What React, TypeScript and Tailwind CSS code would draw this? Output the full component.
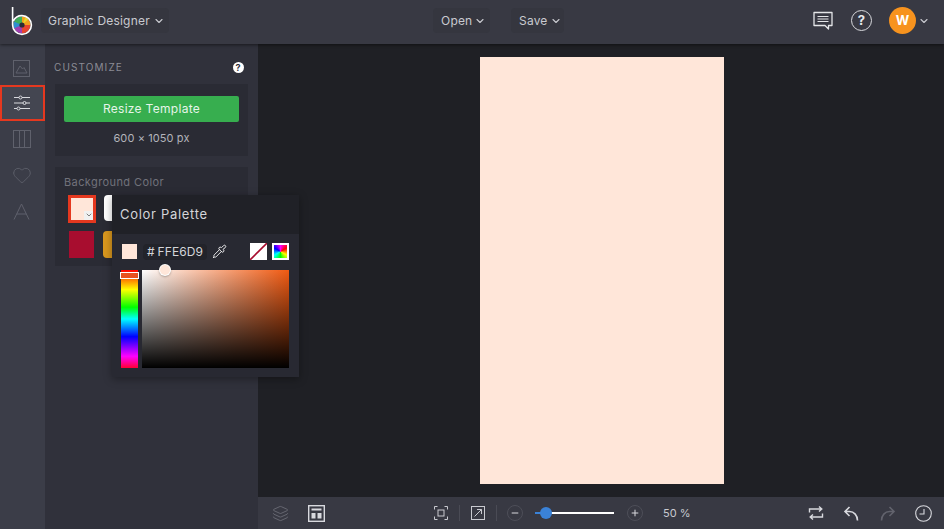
import React from 'react';
import { ChevronDown, Layers, Minus, Plus, Heart, Pipette } from 'lucide-react';

const font = { fontFamily: '"Inter", "Liberation Sans", sans-serif' };

const Logo = () => (
  <svg width="24" height="30" viewBox="0 0 24 30">
    <defs>
      <clipPath id="ring"><circle cx="12" cy="19" r="8.5" /></clipPath>
    </defs>
    <g clipPath="url(#ring)">
      <path d="M12 19 L12 8 L24 8 L24 19 Z" fill="#f2a01e" />
      <path d="M12 19 L24 19 L24 30 L12 30 Z" fill="#e8452f" />
      <path d="M12 19 L12 30 L0 30 L0 19 Z" fill="#a03fb0" />
      <path d="M12 19 L0 19 L0 8 L12 8 Z" fill="#3fae5a" />
      <path d="M12 19 L17 8 L24 8 Z" fill="#e6d72a" />
      <path d="M12 19 L0 24 L0 14 Z" fill="#2f8fd0" />
    </g>
    <circle cx="12" cy="19" r="2.6" fill="#2b2c34" />
    <path d="M2.6 1 V19 A9.4 9.4 0 1 0 12 9.6 A9.4 9.4 0 0 0 3.4 15" fill="none" stroke="#fff" strokeWidth="1.6" />
  </svg>
);

const HeaderButton = ({ label, className }: { label: string; className: string }) => (
  <button className={`flex h-[25px] items-center gap-[2px] whitespace-nowrap rounded-sm bg-[#35363f] pl-[8px] text-[12px] tracking-[0.2px] text-[#c9cad0] ${className}`}>
    {label}
    <ChevronDown size={12} strokeWidth={2.2} />
  </button>
);

const Sliders = () => (
  <svg className="mr-[2px]" width="18" height="16" viewBox="0 0 18 16" fill="none" stroke="#d8d9de" strokeWidth="1">
    <path d="M1 2.5h5M9 2.5h8M1 8h9M13 8h4M1 13.5h3M7 13.5h10" />
    <circle cx="7.5" cy="2.5" r="1.5" />
    <circle cx="11.5" cy="8" r="1.5" />
    <circle cx="5.5" cy="13.5" r="1.5" />
  </svg>
);

const App: React.FC = () => {
  return (
    <div style={font} className="flex h-[529px] w-[944px] flex-col overflow-hidden bg-[#1f2025]">
      {/* top bar */}
      <header className="relative z-10 flex h-[44px] shrink-0 items-center bg-[#383943] pb-[3px] shadow-[0_1px_3px_rgba(0,0,0,0.5)]">
        <div className="ml-[10px] w-[24px]"><Logo /></div>
        <button className="ml-[7px] flex h-[25px] w-[128px] items-center gap-[3px] whitespace-nowrap rounded-sm bg-[#35363f] pl-[7px] text-[12px] tracking-[0.2px] text-[#c9cad0]">
          Graphic Designer
          <ChevronDown size={12} strokeWidth={2.2} />
        </button>
        <HeaderButton label="Open" className="ml-[264px] w-[57px]" />
        <HeaderButton label="Save" className="ml-[21px] w-[53px]" />
        <svg className="ml-[248px]" width="22" height="22" viewBox="0 0 22 22" fill="none" stroke="#e4e5e8" strokeWidth="1.3">
          <path d="M2 2.5h18v13h-3.5v3.5l-3.5-3.5H2z" strokeLinejoin="round" />
          <path d="M5.5 6.5h11M5.5 9h11M5.5 11.5h11" strokeWidth="1" />
        </svg>
        <div className="ml-[17px] flex h-[21px] w-[21px] items-center justify-center rounded-full border border-[#d8d9dd] text-[13px] font-bold text-[#e8e9ec]">?</div>
        <div className="ml-[17px] flex h-[27px] w-[27px] items-center justify-center rounded-full bg-[#f7931e] text-[13px] font-bold text-white">W</div>
        <ChevronDown className="ml-[2px] text-[#c9cad0]" size={12} strokeWidth={2.2} />
      </header>

      <div className="flex min-h-0 flex-1">
        {/* icon rail */}
        <nav className="flex w-[45px] shrink-0 flex-col items-center bg-[#3b3d48] pt-[16px]">
          <svg className="mb-[8px] mr-[2px]" width="17" height="17" viewBox="0 0 17 17" fill="none" stroke="#5f616c" strokeWidth="1">
            <rect x="0.5" y="0.5" width="16" height="16" />
            <path d="M3 13l4-7 2.5 3 1.5-1.5L14 13z" />
          </svg>
          <div className="flex h-[36px] w-[45px] items-center justify-center border-2 border-[#e5381f] bg-[#444651]">
            <Sliders />
          </div>
          <svg className="mr-[2px] mt-[9px]" width="18" height="18" viewBox="0 0 18 18" fill="none" stroke="#5f616c" strokeWidth="1">
            <rect x="0.5" y="0.5" width="17" height="17" />
            <path d="M6.5 0.5v17M11.5 0.5v17" />
          </svg>
          <Heart className="mr-[2px] mt-[17px] text-[#5f616c]" size={20} strokeWidth={1} />
          <svg className="mr-[2px] mt-[18px]" width="17" height="17" viewBox="0 0 17 17" fill="none" stroke="#5f616c" strokeWidth="1">
            <path d="M1 16.5L8.5 1 16 16.5M3.6 11h9.8" />
          </svg>
        </nav>

        {/* side panel */}
        <aside className="relative w-[213px] shrink-0 bg-[#30313b] px-[10px] pt-[12px]">
          <div className="-ml-[1px] flex items-center justify-between pr-[4px] pt-[4px] text-[10px] tracking-[1.1px] text-[#8b8c95]">
            CUSTOMIZE
            <span className="flex h-[11px] w-[11px] items-center justify-center rounded-full bg-white text-[9px] font-bold text-[#30313b]">?</span>
          </div>
          <div className="mt-[9px] h-[72px] bg-[#2a2b34] px-[9px] pt-[12px]">
            <button className="flex h-[26px] w-[175px] items-center justify-center rounded-[2px] bg-[#37ae4f] text-[12px] tracking-[0.3px] text-[#e6f5e9]">
              Resize Template
            </button>
            <div className="mt-[8px] text-center text-[11px] tracking-[0.1px] text-[#b3b4bb]">600 × 1050 px</div>
          </div>
          <div className="mt-[11px] h-[99px] bg-[#2a2b34] px-[9px] pt-[7px]">
            <div className="text-[11px] tracking-[0.4px] text-[#71727b]">Background Color</div>
            <div className="mt-[4px] flex gap-[8px] pl-[4px]">
              <div className="relative h-[28px] w-[28px] border-[3px] border-[#e5381f] bg-[#ffe6d9]">
                <span className="absolute bottom-0 right-0 flex h-[9px] w-[9px] items-center justify-center bg-[#f0f0f0]">
                  <ChevronDown size={8} strokeWidth={2} className="text-[#444]" />
                </span>
              </div>
              <div className="h-[26px] w-[26px] rounded-sm bg-white" />
            </div>
            <div className="mt-[8px] flex gap-[9px] pl-[5px]">
              <div className="h-[27px] w-[25px] bg-[#a80d2f]" />
              <div className="h-[27px] w-[26px] rounded-sm bg-[#d9971e]" />
            </div>
          </div>

          {/* colour palette popover */}
          <div className="absolute left-[67px] top-[151px] z-20 w-[187px] bg-[#282932] shadow-[0_2px_8px_rgba(0,0,0,0.35)]">
            <div className="flex h-[39px] items-center bg-[#202127] pl-[8px] text-[13px] tracking-[0.7px] text-[#d4d5d9]">Color Palette</div>
            <div className="flex items-center pl-[10px] pt-[9px]">
              <div className="h-[15px] w-[15px] bg-[#ffe6d9]" />
              <div className="ml-[6px] flex h-[16px] w-[64px] items-center justify-center gap-[3px] rounded-sm bg-[#22232a] text-[12px] tracking-[0.1px] text-[#d4d5d9]">
                <span>#</span><span>FFE6D9</span>
              </div>
              <Pipette className="ml-[5px] text-white" size={15} strokeWidth={1.4} />
              <svg className="ml-[23px]" width="17" height="17" viewBox="0 0 17 17">
                <rect width="17" height="17" fill="#fff" />
                <path d="M0 17L17 0" stroke="#a80d2f" strokeWidth="1.6" />
              </svg>
              <div className="ml-[5px] h-[17px] w-[17px] border-[2px] border-white bg-[conic-gradient(#f0f,#f00,#ff0,#0f0,#0ff,#00f,#f0f)]" />
            </div>
            <div className="relative flex gap-[4px] pb-[9px] pl-[9px] pt-[10px]">
              <div className="relative h-[98px] w-[17px] bg-[linear-gradient(to_bottom,#f00_0%,#ff0_20%,#0f0_38%,#0ff_50%,#00f_68%,#f0f_88%,#f03_100%)]">
                <div className="absolute left-[-1px] top-[2px] h-[7px] w-[19px] border border-white bg-[#e8521f]" />
              </div>
              <div className="relative h-[98px] w-[147px] bg-[linear-gradient(to_bottom,transparent,#000),linear-gradient(to_right,#fff,#f05a12)]">
                <div className="absolute left-[18px] top-[-5px] h-[10px] w-[10px] rounded-full bg-[#ffe6d9] ring-1 ring-white shadow-[0_1px_3px_rgba(0,0,0,0.6)]" />
              </div>
            </div>
          </div>
        </aside>

        <div className="flex min-w-0 flex-1 flex-col">
          {/* canvas */}
          <main className="flex flex-1 items-center justify-center pl-[2px]">
            <div className="h-[427px] w-[244px] bg-[#ffe6d9]" />
          </main>

          {/* bottom bar */}
          <footer className="flex h-[32px] shrink-0 items-center bg-[#383943] text-[#d8d9de]">
            <Layers className="ml-[14px] text-[#6e6f79]" size={17} strokeWidth={1.2} />
            <svg className="ml-[19px]" width="17" height="17" viewBox="0 0 17 17" fill="none" stroke="#d8d9de" strokeWidth="1.4">
              <rect x="0.7" y="0.7" width="15.6" height="15.6" />
              <path d="M3.5 4.5h10" strokeWidth="2" />
              <rect x="3.5" y="8" width="4" height="5.5" fill="#d8d9de" stroke="none" />
              <rect x="9.5" y="8" width="4" height="5.5" fill="#d8d9de" stroke="none" />
            </svg>
            <svg className="ml-[109px]" width="14" height="14" viewBox="0 0 14 14" fill="none" stroke="#c9cad0" strokeWidth="1">
              <path d="M0.5 3.5v-3h3M10.5 0.5h3v3M13.5 10.5v3h-3M3.5 13.5h-3v-3" />
              <rect x="4" y="4" width="6" height="6" />
            </svg>
            <div className="ml-[11px] h-[16px] w-px bg-[#4a4b55]" />
            <svg className="ml-[11px]" width="14" height="14" viewBox="0 0 14 14" fill="none" stroke="#c9cad0" strokeWidth="1">
              <rect x="0.5" y="0.5" width="13" height="13" />
              <path d="M3.5 10.5L10.5 3.5M6 3.5h4.5V8" />
            </svg>
            <div className="ml-[11px] h-[16px] w-px bg-[#4a4b55]" />
            <div className="ml-[10px] flex h-[16px] w-[16px] items-center justify-center rounded-full border border-[#4d4e58]">
              <Minus size={10} strokeWidth={2.4} />
            </div>
            <div className="relative ml-[12px] h-[2px] w-[79px] bg-white">
              <div className="absolute left-[5px] top-[-5px] h-[12px] w-[12px] rounded-full bg-[#3a82d8]" />
              <div className="absolute left-0 top-0 h-[2px] w-[6px] bg-[#3a82d8]" />
            </div>
            <div className="ml-[13px] flex h-[16px] w-[16px] items-center justify-center rounded-full border border-[#4d4e58]">
              <Plus size={10} strokeWidth={2.4} />
            </div>
            <span className="ml-[20px] w-[26px] whitespace-nowrap text-[11px] text-[#c9cad0]">50 %</span>
            <svg className="ml-[119px]" width="16" height="16" viewBox="0 0 16 16" fill="none" stroke="#d8d9de" strokeWidth="1.4">
              <path d="M1.5 7.5V4h12M11 1.5L13.8 4 11 6.5M14.5 8.5V12h-12M5 9.5L2.2 12 5 14.5" />
            </svg>
            <svg className="ml-[19px]" width="17" height="17" viewBox="0 0 17 17" fill="none" stroke="#d8d9de" strokeWidth="1.6">
              <path d="M6.5 2L2 6.5 6.5 11M2 6.5h4.5c4.5 0 8 4 8 9" />
            </svg>
            <svg className="ml-[19px]" width="17" height="17" viewBox="0 0 17 17" fill="none" stroke="#62636d" strokeWidth="1.6">
              <path d="M10.5 2L15 6.5 10.5 11M15 6.5h-4.5c-4.5 0-8 4-8 9" />
            </svg>
            <svg className="ml-[19px]" width="17" height="17" viewBox="0 0 17 17" fill="none" stroke="#d8d9de" strokeWidth="1.1">
              <circle cx="8.5" cy="8.5" r="7.8" />
              <path d="M9 4v5H4.5" />
            </svg>
          </footer>
        </div>
      </div>
    </div>
  );
};

export default App;
